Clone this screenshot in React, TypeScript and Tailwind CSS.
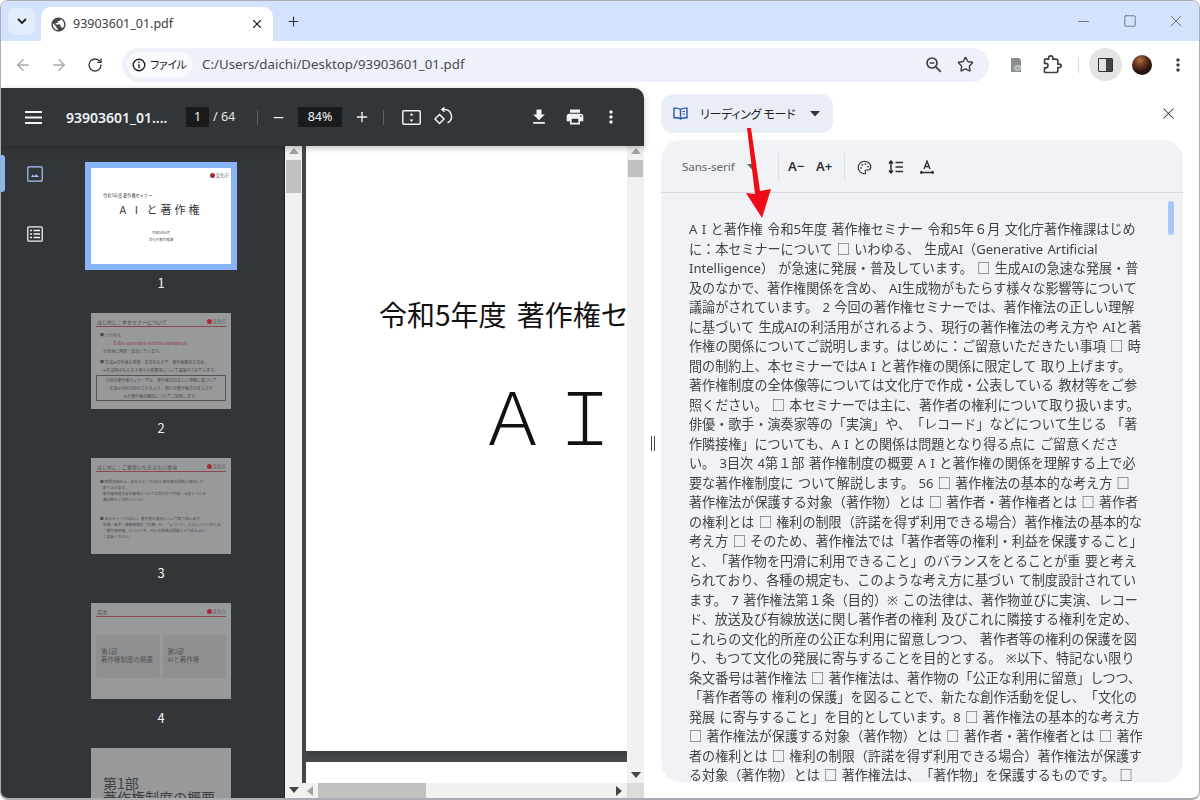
import React from "react";
import { X, Plus, ArrowLeft, ArrowRight, RotateCw, Minus, Square, Star, Palette } from "lucide-react";

const LINES = [
  "A I と著作権 令和5年度 著作権セミナー 令和5年６月 文化庁著作権課はじめ",
  "に：本セミナーについて □ いわゆる、 生成AI（Generative Artificial",
  "Intelligence） が急速に発展・普及しています。 □ 生成AIの急速な発展・普",
  "及のなかで、著作権関係を含め、 AI生成物がもたらす様々な影響等について",
  "議論がされています。 2 今回の著作権セミナーでは、著作権法の正しい理解",
  "に基づいて 生成AIの利活用がされるよう、現行の著作権法の考え方や AIと著",
  "作権の関係についてご説明します。はじめに：ご留意いただきたい事項 □ 時",
  "間の制約上、本セミナーではA I と著作権の関係に限定して 取り上げます。",
  "著作権制度の全体像等については文化庁で作成・公表している 教材等をご参",
  "照ください。 □ 本セミナーでは主に、著作者の権利について取り扱います。",
  "俳優・歌手・演奏家等の「実演」や、「レコード」などについて生じる 「著",
  "作隣接権」についても、A I との関係は問題となり得る点に ご留意くださ",
  "い。 3目次 4第１部 著作権制度の概要 A I と著作権の関係を理解する上で必",
  "要な著作権制度に ついて解説します。 56 □ 著作権法の基本的な考え方 □",
  "著作権法が保護する対象（著作物）とは □ 著作者・著作権者とは □ 著作者",
  "の権利とは □ 権利の制限（許諾を得ず利用できる場合）著作権法の基本的な",
  "考え方 □ そのため、著作権法では「著作者等の権利・利益を保護すること」",
  "と、「著作物を円滑に利用できること」のバランスをとることが重 要と考え",
  "られており、各種の規定も、このような考え方に基づい て制度設計されてい",
  "ます。 7 著作権法第１条（目的）※ この法律は、著作物並びに実演、レコー",
  "ド、放送及び有線放送に関し著作者の権利 及びこれに隣接する権利を定め、",
  "これらの文化的所産の公正な利用に留意しつつ、 著作者等の権利の保護を図",
  "り、もつて文化の発展に寄与することを目的とする。 ※以下、特記ない限り",
  "条文番号は著作権法 □ 著作権法は、著作物の「公正な利用に留意」しつつ、",
  "「著作者等の 権利の保護」を図ることで、新たな創作活動を促し、「文化の",
  "発展 に寄与すること」を目的としています。8 □ 著作権法の基本的な考え方",
  "□ 著作権法が保護する対象（著作物）とは □ 著作者・著作権者とは □ 著作",
  "者の権利とは □ 権利の制限（許諾を得ず利用できる場合）著作権法が保護す",
  "る対象（著作物）とは □ 著作権法は、「著作物」を保護するものです。 □",
];

function Mat({ d, size = 20, className = "" }: { d: string; size?: number; className?: string }) {
  return (
    <svg width={size} height={size} viewBox="0 0 24 24" fill="currentColor" className={className}>
      <path d={d} />
    </svg>
  );
}

const DOTS = "M12 8c1.1 0 2-.9 2-2s-.9-2-2-2-2 .9-2 2 .9 2 2 2zm0 2c-1.1 0-2 .9-2 2s.9 2 2 2 2-.9 2-2-.9-2-2-2zm0 6c-1.1 0-2 .9-2 2s.9 2 2 2 2-.9 2-2-.9-2-2-2z";
const GLOBE = "M12 2C6.48 2 2 6.48 2 12s4.48 10 10 10 10-4.48 10-10S17.52 2 12 2zm-1 17.93c-3.95-.49-7-3.85-7-7.93 0-.62.08-1.21.21-1.79L9 15v1c0 1.1.9 2 2 2v1.93zm6.9-2.54c-.26-.81-1-1.39-1.9-1.39h-1v-3c0-.55-.45-1-1-1H8v-2h2c.55 0 1-.45 1-1V7h2c1.1 0 2-.9 2-2v-.41c2.93 1.19 5 4.06 5 7.41 0 2.08-.8 3.97-2.1 5.39z";
const DOWNLOAD = "M19 9h-4V3H9v6H5l7 7 7-7zM5 18v2h14v-2H5z";
const PRINT = "M19 8H5c-1.66 0-3 1.34-3 3v6h4v4h12v-4h4v-6c0-1.66-1.34-3-3-3zm-3 11H8v-5h8v5zm3-7c-.55 0-1-.45-1-1s.45-1 1-1 1 .45 1 1-.45 1-1 1zm-1-9H6v4h12V3z";

function Tri({ dir, className = "" }: { dir: "up" | "down" | "left" | "right"; className?: string }) {
  const pts = { up: "0,7 5,1 10,7", down: "0,2 10,2 5,8", left: "8,0 8,10 2,5", right: "2,0 2,10 8,5" }[dir];
  return (
    <svg width="10" height="10" viewBox="0 0 10 10" className={className} fill="currentColor">
      <polygon points={pts} />
    </svg>
  );
}

function Caret({ className = "" }: { className?: string }) {
  return (
    <svg width="10" height="6" viewBox="0 0 10 6" className={className} fill="currentColor">
      <polygon points="0,0 10,0 5,5.5" />
    </svg>
  );
}

function TabStrip() {
  return (
    <div className="h-[40px] shrink-0 bg-[#d3e3fd] flex items-end pl-[7px] text-[#1f1f1f]">
      <div className="self-start mt-[7px] w-[27px] h-[27px] rounded-lg bg-[#e3ecfb] flex items-center justify-center">
        <svg width="10" height="7" viewBox="0 0 10 7" fill="none" stroke="#1f1f1f" strokeWidth="1.8"><path d="M1 1l4 4 4-4" /></svg>
      </div>
      <div className="ml-[6px] w-[232px] h-[34px] bg-white rounded-t-[10px] flex items-center pl-[9px] pr-[9px]">
        <Mat d={GLOBE} size={17} className="text-[#454746]" />
        <span className="ml-[6px] text-[12.5px] text-[#3c4043] flex-1">93903601_01.pdf</span>
        <X size={14} strokeWidth={2} />
      </div>
      <div className="self-start mt-[13px] ml-[13px]">
        <Plus size={15} strokeWidth={1.8} className="text-[#333]" />
      </div>
      <div className="flex-1" />
      <div className="self-start mt-[10px] flex items-center text-[#44484e]">
        <div className="w-[47px] flex justify-center"><Minus size={17} strokeWidth={1} /></div>
        <div className="w-[45px] flex justify-center"><Square size={14} strokeWidth={1.1} /></div>
        <div className="w-[46px] flex justify-center pl-px"><X size={20} strokeWidth={0.9} /></div>
      </div>
      <div className="w-[1px]" />
    </div>
  );
}

function Toolbar() {
  return (
    <div className="h-[47px] shrink-0 bg-white flex items-center pl-[13px] text-[#454746]">
      <ArrowLeft size={18} strokeWidth={1.8} className="text-[#a7a9ab]" />
      <ArrowRight size={18} strokeWidth={1.8} className="text-[#a7a9ab] ml-[18px]" />
      <RotateCw size={16} strokeWidth={2} className="ml-[19px] text-[#3c4043]" />
      <div className="ml-[19px] w-[867px] h-[34px] rounded-full bg-[#edf2fa] flex items-center pl-[5px] pr-[15px]">
        <div className="h-[25px] w-[66px] rounded-full bg-[#f8fafd] flex items-center pl-[5px] gap-[4px] text-[#1f1f1f]">
          <svg width="14" height="14" viewBox="0 0 14 14" fill="none" stroke="#1f1f1f" strokeWidth="1.4">
            <circle cx="7" cy="7" r="5.8" />
            <path d="M7 6.2v4M7 3.6v1.3" />
          </svg>
          <span className="text-[11px] tracking-[-0.4px] whitespace-nowrap [font-feature-settings:'palt'] font-['Noto_Sans_CJK_JP',sans-serif]">ファイル</span>
        </div>
        <span className="ml-[9px] text-[13.3px] text-[#474a4d] flex-1">C:/Users/daichi/Desktop/93903601_01.pdf</span>
        <svg width="18" height="18" viewBox="0 0 18 18" fill="none" stroke="#3c4043" strokeWidth="1.7" className="mr-[14px]">
          <circle cx="7" cy="7" r="5" />
          <path d="M4.6 7h4.8M10.8 10.8l5 5" />
        </svg>
        <Star size={17} strokeWidth={2} className="text-[#3c4043]" />
      </div>
      <svg width="12" height="16" viewBox="0 0 12 16" className="ml-[21px]">
        <path d="M1 1h8l2 2v12H1z" fill="#8b8e91" />
        <text x="3.5" y="13" fontSize="8" fill="#e8e8e8" fontFamily="Liberation Sans">@</text>
      </svg>
      <svg width="20" height="20" viewBox="0 0 24 24" fill="none" stroke="#3c4043" strokeWidth="2" className="ml-[20px]">
        <path d="M20.5 11H19V7c0-1.1-.9-2-2-2h-4V3.5C13 2.12 11.88 1 10.5 1S8 2.12 8 3.5V5H4c-.6 0-1 .4-1 1v4h1.5c1.49 0 2.7 1.21 2.7 2.7s-1.21 2.7-2.7 2.7H3v4.6c0 .6.4 1 1 1h13c1.1 0 2-.9 2-2v-4h1.5c1.38 0 2.5-1.12 2.5-2.5S21.88 11 20.5 11z" />
      </svg>
      <div className="ml-[16px] w-px h-[16px] bg-[#d5d7da]" />
      <div className="ml-[10px] w-[33px] h-[33px] rounded-full bg-[#e3e3e3] flex items-center justify-center">
        <div className="w-[15px] h-[14px] border-[1.5px] border-[#333] rounded-[1px] flex justify-end">
          <div className="w-[6px] bg-[#444]" />
        </div>
      </div>
      <div className="ml-[10px] w-[20px] h-[20px] rounded-full bg-[radial-gradient(circle_at_40%_25%,#b0703f_0%,#6b3a20_30%,#2a150c_60%,#140a06_90%)]" />
      <Mat d={DOTS} size={20} className="ml-[16px] text-[#3c4043]" />
    </div>
  );
}

function PdfToolbar() {
  return (
    <div className="h-[58px] shrink-0 bg-[#323639] rounded-tr-[10px] flex items-center text-white text-[13px] pl-[24px] relative z-10 shadow-[0_2px_6px_rgba(0,0,0,0.25)]">
      <svg width="17" height="13" viewBox="0 0 17 13" fill="#f1f3f4"><path d="M0 0h17v2H0zM0 5.5h17v2H0zM0 11h17v2H0z" /></svg>
      <span className="ml-[24px] w-[119px] text-[14px] font-semibold text-[#f1f3f4] whitespace-nowrap">93903601_01....</span>
      <div className="ml-[1px] w-[23px] h-[20px] bg-[#191b1c] flex items-center justify-center text-[12.5px] text-[#f1f3f4]">1</div>
      <span className="ml-[4px] w-[27px] text-[12.5px] text-[#e3e5e7] whitespace-nowrap">/ 64</span>
      <div className="ml-[17px] w-px h-[15px] bg-[#5f6368]" />
      <Minus size={15} strokeWidth={2} className="ml-[13px] text-[#f1f3f4]" />
      <div className="ml-[12px] w-[44px] h-[20px] bg-[#191b1c] flex items-center justify-center text-[12.5px] text-[#f1f3f4]">84%</div>
      <Plus size={16} strokeWidth={2} className="ml-[12px] text-[#f1f3f4]" />
      <div className="ml-[13px] w-px h-[15px] bg-[#5f6368]" />
      <svg width="19" height="15" viewBox="0 0 19 15" fill="none" stroke="#f1f3f4" strokeWidth="1.5" className="ml-[18px]">
        <rect x="0.8" y="0.8" width="17.4" height="13.4" rx="1" />
        <path d="M9.5 3l2 2.4h-4zM9.5 12l2-2.4h-4z" fill="#f1f3f4" stroke="none" />
      </svg>
      <svg width="20" height="20" viewBox="0 0 20 20" fill="none" stroke="#f1f3f4" strokeWidth="1.5" className="ml-[12px]">
        <path d="M6.500 7.500l4.500 4.500-4.500 4.500L2 12z" />
        <path d="M9 2.500h2.500a7 7 0 0 1 3 13.300" />
        <path d="M11.500 0.500L9 2.500l2.500 2.200" />
      </svg>
      <Mat d={DOWNLOAD} size={20} className="ml-[76px] text-[#f1f3f4]" />
      <Mat d={PRINT} size={20} className="ml-[16px] text-[#f1f3f4]" />
      <Mat d={DOTS} size={20} className="ml-[16px] text-[#f1f3f4]" />
    </div>
  );
}

function Logo() {
  return (
    <div className="flex items-center gap-[1px]">
      <div className="w-[5px] h-[5px] rounded-full bg-[#a52a3a]" />
      <span className="text-[4.500px] leading-none text-[#555]">文化庁</span>
    </div>
  );
}

function SlideHead({ title }: { title: string }) {
  return (
    <div className="px-[5px] pt-[5px]">
      <div className="flex justify-between items-center h-[7px]">
        <span className="text-[5px] leading-[7px] text-[#4a4a4a] pl-[1px]">{title}</span>
        <Logo />
      </div>
      <div className="h-px bg-[#8e4650] mt-[1px]" />
    </div>
  );
}

function Thumb({ children, label, selected }: { children: React.ReactNode; label?: string; selected?: boolean }) {
  return (
    <div className="flex flex-col items-center shrink-0">
      <div className={selected ? "border-[6px] border-[#8ab4f8]" : ""}>
        <div className={`w-[140px] h-[96px] overflow-hidden ${selected ? "bg-white" : "bg-[#98999b]"}`}>{children}</div>
      </div>
      {label && <div className={`text-[13px] leading-[18px] text-[#f1f3f4] ${selected ? "mt-[4px]" : "mt-[10px]"}`}>{label}</div>}
    </div>
  );
}

function Sidebar() {
  return (
    <div className="w-[284px] shrink-0 bg-[#323639] flex overflow-hidden border-r border-[#222] font-['Noto_Sans_CJK_JP',sans-serif]">
      <div className="w-[69px] shrink-0 pr-[1px] relative flex flex-col items-center text-[#f1f3f4]">
        <div className="absolute left-0 top-[9px] w-[4px] h-[37px] bg-[#8ab4f8] rounded-r-[3px]" />
        <svg width="16" height="16" viewBox="0 0 16 16" fill="none" stroke="#a8c7fa" strokeWidth="1.200" className="mt-[20px]">
          <rect x="0.8" y="0.8" width="14.400" height="14.400" rx="1" />
          <path d="M4 11l2-2.500 1.500 2 1.500-2.500 3 3z" fill="#a8c7fa" stroke="none" />
        </svg>
        <svg width="16" height="16" viewBox="0 0 16 16" fill="none" stroke="#f1f3f4" strokeWidth="1.300" className="mt-[44px]">
          <rect x="0.8" y="0.8" width="14.400" height="14.400" rx="1" />
          <path d="M3 4.500h2M3 8h2M3 11.500h2M6.500 4.500H13M6.500 8H13M6.500 11.500H13" />
        </svg>
      </div>
      <div className="w-[182px] shrink-0 flex flex-col items-center pt-[16px] gap-[21px]">
        <Thumb selected label="1">
          <div className="h-full flex flex-col relative">
            <div className="flex justify-end pr-[2px] pt-[4px] h-[10px]"><Logo /></div>
            <div className="pl-[12px] mt-[14px] text-[4.200px] leading-[6px] text-[#444]">令和5年度 著作権セミナー</div>
            <div className="text-center text-[11px] leading-[14px] tracking-[3px] text-[#333] mt-[4px]">A I と著作権</div>
            <div className="text-center text-[3.500px] leading-[7px] text-[#555] mt-[13px]">令和5年6月<br />文化庁著作権課</div>
          </div>
        </Thumb>
        <Thumb label="2">
          <SlideHead title="はじめに：本セミナーについて" />
          <div className="px-[9px] pt-[4px] text-[4px] leading-[8px] text-[#4c4c4c] whitespace-nowrap">
            <div>■ いわゆる、</div>
            <div className="pl-[13px] text-[#8c3a46]">生成AI (Generative Artificial Intelligence)</div>
            <div className="pl-[3px]">が急速に発展・普及しています。</div>
            <div className="mt-[3px]">■ 生成AIの急速な発展・普及のなかで、著作権関係を含め、</div>
            <div className="pl-[3px]">AI生成物がもたらす様々な影響等について議論がされています。</div>
          </div>
          <div className="mx-[5px] mt-[1px] border border-[#555] text-center text-[4px] leading-[8px] text-[#4c4c4c] whitespace-nowrap">
            今回の著作権セミナーでは、著作権法の正しい理解に基づいて<br />生成AIの利活用がされるよう、現行の著作権法の考え方や<br />AIと著作権の関係についてご説明します。
          </div>
        </Thumb>
        <Thumb label="3">
          <SlideHead title="はじめに：ご留意いただきたい事項" />
          <div className="px-[9px] pt-[7px] text-[3.700px] leading-[6px] text-[#4c4c4c] whitespace-nowrap">
            <div>■ 時間の制約上、本セミナーではAIと著作権の関係に限定して</div>
            <div className="pl-[3px]">取り上げます。</div>
            <div className="pl-[3px]">著作権制度の全体像等については文化庁で作成・公表している</div>
            <div className="pl-[3px]">教材等をご参照ください。</div>
            <div className="mt-[13px]">■ 本セミナーでは主に、著作者の権利について取り扱います。</div>
            <div className="pl-[3px]">俳優・歌手・演奏家等の「実演」や、「レコード」などについて生じる</div>
            <div className="pl-[3px]">「著作隣接権」についても、AIとの関係は問題となり得る点に</div>
            <div className="pl-[3px]">ご留意ください。</div>
          </div>
        </Thumb>
        <Thumb label="4">
          <SlideHead title="目次" />
          <div className="flex gap-[3px] px-[5px] mt-[18px]">
            <div className="flex-1 h-[43px] bg-[#8f9092] rounded-[2px] pl-[5px] pt-[13px] text-[6.500px] leading-[7.500px] text-[#555] whitespace-nowrap">第1部<br />著作権制度の概要</div>
            <div className="flex-1 h-[43px] bg-[#8f9092] rounded-[2px] pl-[5px] pt-[13px] text-[6.500px] leading-[7.500px] text-[#555] whitespace-nowrap">第2部<br />AIと著作権</div>
          </div>
        </Thumb>
        <Thumb>
          <div className="pl-[12px] pt-[28px] text-[14px] leading-[14px] text-[#3f4042] whitespace-nowrap">第1部<br />著作権制度の概要</div>
        </Thumb>
      </div>
    </div>
  );
}

function PdfMain() {
  return (
    <div className="flex-1 min-w-0 flex flex-col">
      <div className="flex-1 min-h-0 flex">
        <div className="flex-1 min-w-0 bg-[#45484b] pl-[4px] flex flex-col overflow-hidden">
          <div className="h-[605px] shrink-0 bg-white overflow-hidden pl-[73px] pt-[150px] font-['Noto_Sans_CJK_JP',sans-serif] text-[#111] [text-spacing-trim:space-all]">
            <div className="text-[28px] leading-[36px] whitespace-nowrap [word-spacing:4px]">令和5年度 著作権セミナー</div>
            <div className="mt-[34px] ml-[98px] text-[72px] leading-[96px] font-light whitespace-nowrap">ＡＩと著作権</div>
          </div>
          <div className="h-[11px] shrink-0 bg-[linear-gradient(#3c3f42,#4a4d50)]" />
          <div className="flex-1 bg-white" />
        </div>
        <div className="w-[17px] shrink-0 bg-[#f1f1f1] flex flex-col items-center">
          <Tri dir="up" className="mt-[1px] text-[#a3a3a3]" />
          <div className="w-[15px] h-[17px] bg-[#c1c1c1] mt-[3px]" />
          <div className="flex-1" />
          <Tri dir="down" className="mb-[3px] text-[#444]" />
        </div>
      </div>
      <div className="h-[15px] shrink-0 flex bg-[#f1f1f1]">
        <div className="flex-1 flex items-center pl-[3px]">
          <Tri dir="left" className="text-[#a3a3a3]" />
          <div className="ml-[3px] w-[108px] h-[15px] bg-[#c1c1c1]" />
          <div className="flex-1" />
          <Tri dir="right" className="mr-[3px] text-[#444]" />
        </div>
        <div className="w-[17px] bg-[#dcdcdc]" />
      </div>
    </div>
  );
}

function PdfViewer() {
  return (
    <div className="w-[643px] shrink-0 flex flex-col">
      <PdfToolbar />
      <div className="flex-1 min-h-0 flex">
        <Sidebar />
        <div className="w-[17px] shrink-0 bg-[#f1f1f1] flex flex-col items-center">
          <Tri dir="up" className="mt-[1px] text-[#a3a3a3]" />
          <div className="w-[15px] h-[33px] bg-[#c1c1c1] mt-[3px]" />
          <div className="flex-1" />
          <Tri dir="down" className="mb-[3px] text-[#444]" />
        </div>
        <PdfMain />
      </div>
    </div>
  );
}

function ReadingPanel() {
  return (
    <div className="flex-1 min-w-0 flex flex-col pr-[16px]">
      <div className="h-[52px] shrink-0 pt-[6px] flex items-start justify-between">
        <div className="w-[172px] h-[39px] rounded-xl bg-[#e9eef6] flex items-center pl-[12px] text-[#1f1f1f]">
          <svg width="15" height="13" viewBox="0 0 15 13" fill="none" stroke="#2a5aa8" strokeWidth="1.400">
            <path d="M7.500 2.500C6 1.200 3.500 1 1 1.200v9.600c2.500-.2 5 0 6.500 1.200 1.500-1.200 4-1.400 6.500-1.200V1.200C11.500 1 9 1.200 7.500 2.500zM7.500 2.500V12" />
            <path d="M9.500 4.500h2.500M9.500 7h2.500" strokeWidth="1" />
          </svg>
          <span className="ml-[12px] text-[12px] tracking-[-0.3px] whitespace-nowrap w-[96px] [font-feature-settings:'palt'] font-['Noto_Sans_CJK_JP',sans-serif]">リーディング モード</span>
          <Caret className="ml-[14px] text-[#333]" />
        </div>
        <X size={19} strokeWidth={1.300} className="mt-[10px] mr-[5px] text-[#333]" />
      </div>
      <div className="flex-1 min-h-0 mb-[16px] rounded-[20px] bg-[#f0f2f5] flex flex-col overflow-hidden relative">
        <div className="h-[53px] shrink-0 border-b border-[#d8dadd] flex items-center pl-[21px] pt-[2px] text-[#3c4043]">
          <span className="text-[11.500px] text-[#5f6368] w-[52px] whitespace-nowrap">Sans-serif</span>
          <Caret className="ml-[13px] text-[#5f6368]" />
          <div className="ml-[21px] w-px h-[28px] bg-[#dcdfe2]" />
          <span className="ml-[9px] w-[19px] text-[13px] font-semibold text-[#2b2e31] whitespace-nowrap">A−</span>
          <span className="ml-[9px] w-[19px] text-[13px] font-semibold text-[#2b2e31] whitespace-nowrap">A+</span>
          <div className="ml-[9px] w-px h-[28px] bg-[#dcdfe2]" />
          <Palette size={15} strokeWidth={1.800} className="ml-[12px] text-[#2b2e31]" />
          <svg width="16" height="14" viewBox="0 0 16 14" fill="none" stroke="#2b2e31" strokeWidth="1.500" className="ml-[16px]">
            <path d="M3 1v12M1 3.500L3 1l2 2.500M1 10.500L3 13l2-2.500M7.500 2.500H15M7.500 7H15M7.500 11.500H15" />
          </svg>
          <svg width="14" height="14" viewBox="0 0 14 14" fill="none" stroke="#2b2e31" strokeWidth="1.300" className="ml-[16px]">
            <path d="M4 9l3-8 3 8M5 6.500h4M0.500 12.500h13M2 11l-1.500 1.500L2 14M12 11l1.500 1.500L12 14" />
          </svg>
        </div>
        <div className="absolute right-[9px] top-[61px] w-[6px] h-[34px] rounded-full bg-[#a8c7fa]" />
        <div className="pl-[28px] pt-[27px] text-[13.08px] leading-[19.500px] text-[#3f4346] whitespace-nowrap overflow-hidden font-['Noto_Sans','Noto_Sans_CJK_JP',sans-serif] [text-spacing-trim:space-all] [word-spacing:1px] [will-change:transform]">
          {LINES.map((l, i) => (
            <div key={i}>{l}</div>
          ))}
        </div>
      </div>
    </div>
  );
}

export default function App() {
  return (
    <div className="w-[1200px] h-[800px] relative overflow-hidden bg-white flex flex-col border-x border-t border-b-2 border-[#a9adb3] rounded-[8px] font-['Noto_Sans','Noto_Sans_CJK_JP',sans-serif]">
      <TabStrip />
      <Toolbar />
      <div className="flex-1 min-h-0 flex">
        <PdfViewer />
        <div className="w-[17px] shrink-0 flex items-center justify-center gap-[2px] text-[#333]">
          <div className="w-px h-[15px] bg-[#444]" />
          <div className="w-px h-[15px] bg-[#444]" />
        </div>
        <ReadingPanel />
      </div>
      <svg width="40" height="100" viewBox="0 0 40 100" className="absolute left-[737px] top-[123px] z-20 pointer-events-none">
        <polygon points="9,4 13,4 22,67 33,65 24,94 8,69 17,70" fill="#ee0c16" />
      </svg>
    </div>
  );
}
